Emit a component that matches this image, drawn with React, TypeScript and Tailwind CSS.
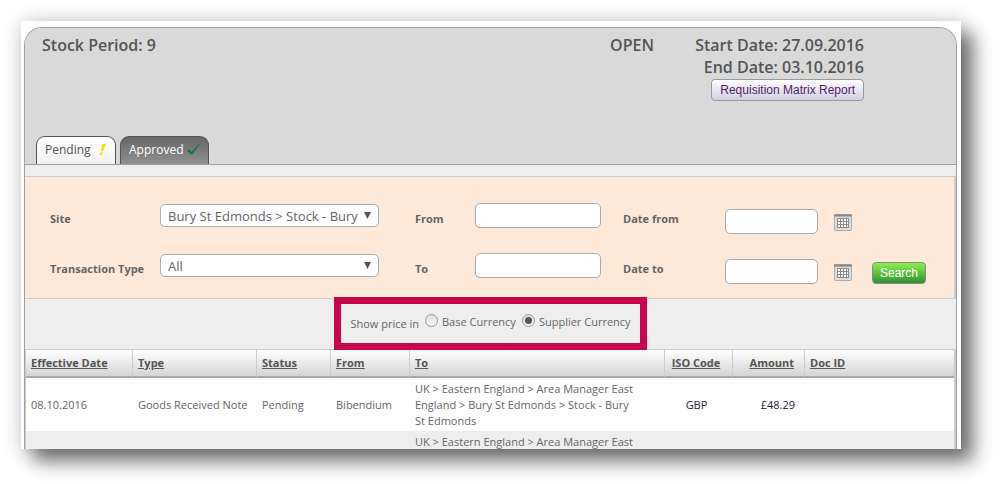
import { useState } from "react";
import type { ReactNode } from "react";
import clsx from "clsx";

const columns = [
  { label: "Effective Date", width: "w-[107px]", align: "text-left" },
  { label: "Type", width: "w-[124px]", align: "text-left" },
  { label: "Status", width: "w-[74px]", align: "text-left" },
  { label: "From", width: "w-[79px]", align: "text-left" },
  { label: "To", width: "w-[255px]", align: "text-left" },
  { label: "ISO Code", width: "w-[68px]", align: "text-center" },
  { label: "Amount", width: "w-[72px]", align: "text-right" },
  { label: "Doc ID", width: "", align: "text-left" },
];

const rows = [
  [
    "08.10.2016",
    "Goods Received Note",
    "Pending",
    "Bibendium",
    "UK > Eastern England > Area Manager East England > Bury St Edmonds > Stock - Bury St Edmonds",
    "GBP",
    "£48.29",
    "",
  ],
  ["", "", "", "", "UK > Eastern England > Area Manager East", "", "", ""],
];

function CalendarIcon() {
  return (
    <svg viewBox="0 0 18 17" className="h-[17px] w-[18px]" aria-hidden="true">
      <rect x="0.5" y="0.5" width="17" height="16" rx="1" fill="#dcdcdc" stroke="#aaa" />
      <path d="M0 0.5h18v2H0z" fill="#858585" />
      <path d="M3 4h12v10H3z" fill="#8d8d8d" />
      <path
        d="M4 5h2v2H4zM7 5h2v2H7zM10 5h2v2h-2zM13 5h1v2h-1zM4 8h2v2H4zM7 8h2v2H7zM10 8h2v2h-2zM13 8h1v2h-1zM4 11h2v2H4zM7 11h2v2H7zM10 11h2v2h-2zM13 11h1v2h-1z"
        fill="#fff"
      />
    </svg>
  );
}

function FieldLabel({ htmlFor, children }: { htmlFor: string; children: ReactNode }) {
  return (
    <label htmlFor={htmlFor} className="self-center text-[11px] leading-4 font-bold text-[#666]">
      {children}
    </label>
  );
}

function SelectField({ id, options }: { id: string; options: string[] }) {
  return (
    <div className="relative mt-px mr-9">
      <select
        id={id}
        className="block h-[23px] w-full appearance-none rounded-[5px] border border-[#aaa] bg-white pr-4 pl-[7px] text-[13px] leading-5 text-[#666]"
      >
        {options.map((option) => (
          <option key={option}>{option}</option>
        ))}
      </select>
      <svg viewBox="0 0 7 7" className="pointer-events-none absolute top-2 right-2 h-[7px] w-[7px]" aria-hidden="true">
        <path d="M0 0h7L3.5 7z" fill="#555" />
      </svg>
    </div>
  );
}

function TextField({ id, className }: { id: string; className: string }) {
  return (
    <input
      id={id}
      type="text"
      className={clsx("h-[25px] rounded-[5px] border border-[#aaa] bg-white px-2 text-[13px] text-[#666]", className)}
    />
  );
}

function CurrencyRadio({ label, checked, onChange }: { label: string; checked: boolean; onChange: () => void }) {
  return (
    <label className="flex items-center gap-1 pb-[3px]">
      <span className="relative -mt-1 block size-[13px]">
        <input
          type="radio"
          name="currency"
          checked={checked}
          onChange={onChange}
          className="block size-[13px] appearance-none rounded-full border border-[#9a9a9a] bg-linear-to-b from-[#ddd] to-[#f8f8f8]"
        />
        {checked && <span className="pointer-events-none absolute inset-[3px] rounded-full bg-[#555]" />}
      </span>
      {label}
    </label>
  );
}

export default function App() {
  const [tab, setTab] = useState("pending");
  const [currency, setCurrency] = useState("supplier");

  return (
    <div className="h-screen overflow-hidden bg-white pt-[21px] pr-[39px] pb-[35px] pl-[21px] font-['Open_Sans','Noto_Sans',sans-serif] text-[#666]">
      <div className="h-full overflow-hidden bg-white pt-[6px] pr-1 pl-[3px] shadow-[12px_12px_18px_rgba(0,0,0,0.55),0_0_20px_rgba(0,0,0,0.18)]">
        <div className="h-full overflow-hidden rounded-t-[18px] border border-b-0 border-[#a0a0a0] bg-[#eee]">
          <header className="flex h-[137px] flex-col justify-between border-b border-[#a0a0a0] bg-[#d9d9d9]">
            <div className="flex pt-[6px] pr-[92px] pl-[17px] text-base leading-[22px] font-semibold text-[#555]">
              <h1 className="flex-1">Stock Period: 9</h1>
              <span>OPEN</span>
              <div className="flex w-[210px] flex-col items-end">
                <span>Start Date: 27.09.2016</span>
                <span>End Date: 03.10.2016</span>
                <button
                  type="button"
                  className="mt-px h-[22px] rounded-[4px] border border-[#999] bg-linear-to-b from-white to-[#cfcfe0] px-2 font-['Liberation_Sans',Arial,sans-serif] text-xs leading-5 font-normal text-[#551a6b]"
                >
                  Requisition Matrix Report
                </button>
              </div>
            </div>
            <nav className="flex gap-1 pl-[11px]">
              <button
                type="button"
                onClick={() => setTab("pending")}
                aria-pressed={tab === "pending"}
                className="flex h-7 w-20 items-center gap-2 rounded-t-[9px] border border-b-0 border-[#555] bg-linear-to-b from-white to-[#f2f2f2] pb-[2px] pl-2 text-xs text-[#555]"
              >
                Pending
                <svg viewBox="0 0 7 11" className="h-[11px] w-[7px]" aria-hidden="true">
                  <path d="M3 0h4L4 7H2zM1 8.5h2.5L3 11H0.5z" fill="#f2e600" />
                </svg>
              </button>
              <button
                type="button"
                onClick={() => setTab("approved")}
                aria-pressed={tab === "approved"}
                className="flex h-7 w-[89px] items-center gap-1 rounded-t-[9px] border border-b-0 border-[#555] bg-linear-to-b from-[#666] to-[#909090] pb-[2px] pl-2 text-xs text-white"
              >
                Approved
                <svg viewBox="0 0 13 11" className="h-[11px] w-[13px]" aria-hidden="true">
                  <path d="M0 6.5L1.8 5l2.4 3L12 0l1 0.5L4.5 11z" fill="#0b7a4b" />
                </svg>
              </button>
            </nav>
          </header>

          <form
            onSubmit={(e) => e.preventDefault()}
            className="mt-[11px] grid grid-cols-[110px_255px_60px_148px_102px_93px_54px_1fr] gap-y-[19px] border-y border-r-2 border-[#ccc] bg-[#fde9d9] pt-[26px] pb-[14px] pl-[25px]"
          >
            <FieldLabel htmlFor="site">Site</FieldLabel>
            <SelectField id="site" options={["Bury St Edmonds > Stock - Bury"]} />
            <FieldLabel htmlFor="from">From</FieldLabel>
            <TextField id="from" className="w-[126px]" />
            <FieldLabel htmlFor="date-from">Date from</FieldLabel>
            <TextField id="date-from" className="mt-[6px] w-full" />
            <button type="button" aria-label="Pick date from" className="ml-4 self-end justify-self-start pb-[3px]">
              <CalendarIcon />
            </button>
            <span />

            <FieldLabel htmlFor="type">Transaction Type</FieldLabel>
            <SelectField id="type" options={["All"]} />
            <FieldLabel htmlFor="to">To</FieldLabel>
            <TextField id="to" className="w-[126px]" />
            <FieldLabel htmlFor="date-to">Date to</FieldLabel>
            <TextField id="date-to" className="mt-[6px] w-full" />
            <button type="button" aria-label="Pick date to" className="ml-4 self-end justify-self-start pb-[3px]">
              <CalendarIcon />
            </button>
            <button
              type="submit"
              className="h-[22px] self-end justify-self-start rounded-[4px] border border-[#888] bg-linear-to-b from-[#8cf04f] to-[#2f9232] px-[7px] font-['Liberation_Sans',Arial,sans-serif] text-xs leading-5 text-white"
            >
              Search
            </button>
          </form>

          <div className="flex h-[50px] justify-center">
            <fieldset className="relative -mt-[2px] flex h-[53px] items-center gap-[6px] border-[7px] border-[#c8064f] px-[9px] text-[11px] leading-4">
              <span className="pt-px">Show price in</span>
              <CurrencyRadio label="Base Currency" checked={currency === "base"} onChange={() => setCurrency("base")} />
              <CurrencyRadio
                label="Supplier Currency"
                checked={currency === "supplier"}
                onChange={() => setCurrency("supplier")}
              />
            </fieldset>
          </div>

          <table className="w-full table-fixed border-separate border-spacing-0 border-t border-r-2 border-l border-[#ccc] text-[11px] leading-4">
            <thead>
              <tr>
                {columns.map((col, i) => (
                  <th
                    key={col.label}
                    className={clsx(
                      "h-7 border-r border-b-2 border-r-[#ccc] border-b-[#aaa] bg-linear-to-b from-white to-[#d4d4d4] font-bold text-[#555] last:border-r-0",
                      i === 6 ? "pr-[10px]" : i === 5 ? "pr-[5px]" : "px-[5px]",
                      col.width,
                      col.align
                    )}
                  >
                    <a href="#" className="underline">
                      {col.label}
                    </a>
                  </th>
                ))}
              </tr>
            </thead>
            <tbody>
              {rows.map((row, i) => (
                <tr key={i} className="bg-white even:bg-[#eee]">
                  {row.map((cell, j) => (
                    <td
                      key={j}
                      className={clsx(
                        "pt-[3px] pb-[2px]",
                        columns[j].align,
                        j === 4 ? "pr-6 pl-[5px]" : j === 5 ? "pr-[5px]" : j === 6 ? "pr-[10px]" : "px-[5px]",
                        (j === 5 || j === 6) && "text-[#223]"
                      )}
                    >
                      {cell}
                    </td>
                  ))}
                </tr>
              ))}
            </tbody>
          </table>
        </div>
      </div>
    </div>
  );
}
